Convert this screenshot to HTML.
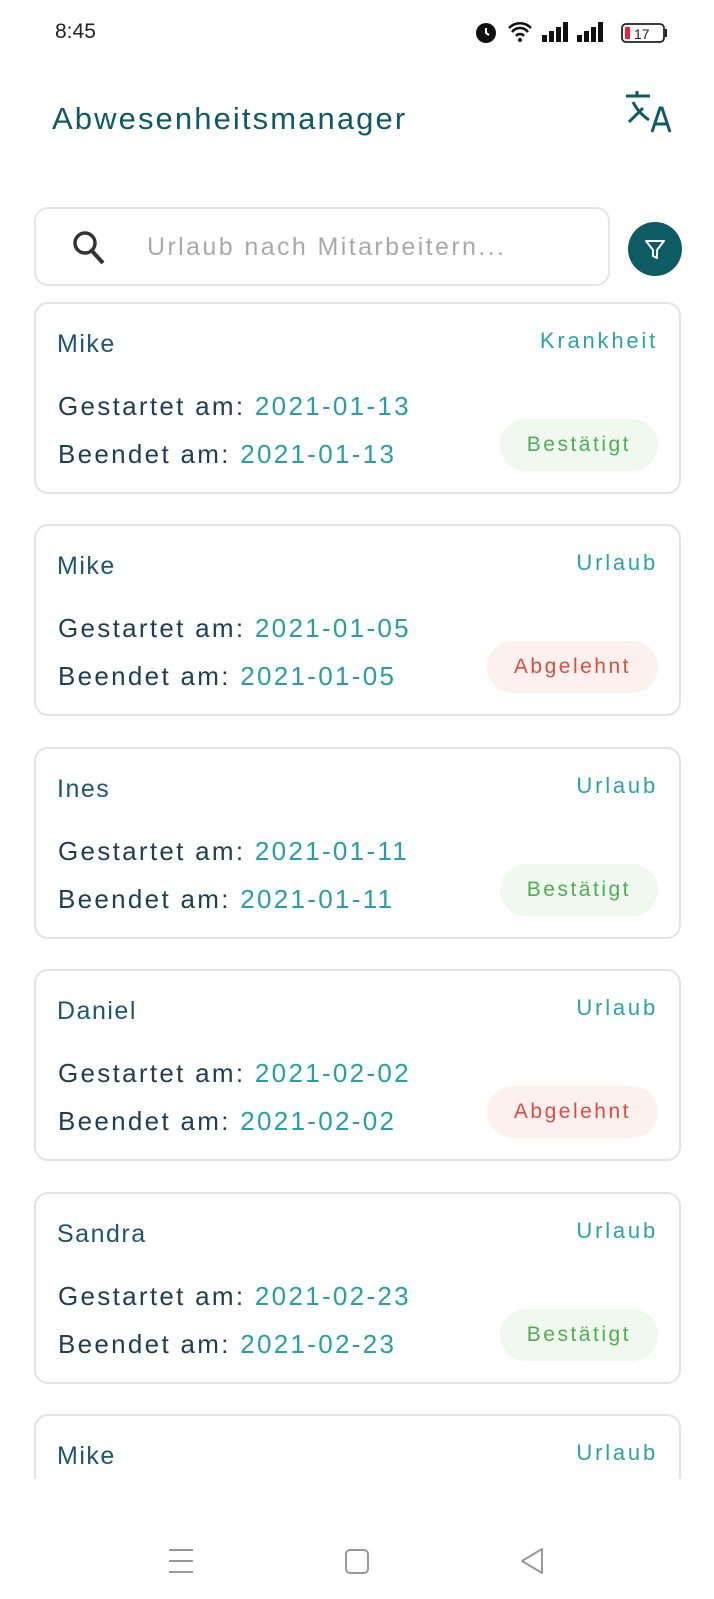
<!DOCTYPE html>
<html><head><meta charset="utf-8"><style>
*{margin:0;padding:0;box-sizing:border-box}
body{width:714px;height:1599px;background:#fff;font-family:"Liberation Sans",sans-serif;position:relative;overflow:hidden}
.abs{position:absolute}
.card{position:absolute;left:34px;width:647px;height:192px;border:2px solid #e3e3e3;border-radius:14px;background:#fff}
.name{position:absolute;left:21px;top:26px;font-size:25px;color:#1f5570;letter-spacing:1.5px}
.type{position:absolute;right:21px;top:24px;font-size:22px;color:#2aa3ab;letter-spacing:2.8px}
.l1,.l2{position:absolute;left:22px;font-size:26px;color:#1f3d55;letter-spacing:2.3px;white-space:nowrap}
.l1{top:87px}.l2{top:135px}
.l1 span,.l2 span{color:#25a0a8}
.badge{position:absolute;right:21px;top:115px;height:52px;border-radius:26px;font-size:21px;letter-spacing:2.5px;line-height:52px;padding:0 27px}
.ok{background:#f1f8f0;color:#4caf50}
.no{background:#fdf1f0;color:#e14b3d}
.clip{position:absolute;left:0;top:1479px;width:714px;height:120px;background:#fff}
</style></head><body>
<div class="abs" style="left:55px;top:20px;font-size:21px;color:#222">8:45</div>
<svg class="abs" style="left:474px;top:18px" width="200" height="28" viewBox="0 0 200 28">
<circle cx="12" cy="15" r="10" fill="#111"/><path d="M12 10v5l3 2" stroke="#fff" stroke-width="2" fill="none"/>
<path d="M35 10a15 15 0 0 1 22 0M38 14a10 10 0 0 1 16 0M42 18a5 5 0 0 1 8 0" stroke="#111" stroke-width="2.5" fill="none"/><circle cx="46" cy="22" r="2" fill="#111"/>
<rect x="68" y="17" width="5" height="7" fill="#111"/><rect x="75" y="13" width="5" height="11" fill="#111"/><rect x="82" y="9" width="5" height="15" fill="#111"/><rect x="89" y="4" width="5" height="20" fill="#111"/>
<rect x="103" y="17" width="5" height="7" fill="#111"/><rect x="110" y="13" width="5" height="11" fill="#111"/><rect x="117" y="9" width="5" height="15" fill="#111"/><rect x="124" y="4" width="5" height="20" fill="#111"/>
<rect x="148" y="6" width="42" height="18" rx="4" fill="none" stroke="#222" stroke-width="1.8"/><rect x="151" y="9" width="5" height="12" fill="#e23"/><rect x="191" y="11" width="2" height="8" fill="#222"/>
<text x="160" y="21" font-size="14" fill="#222" font-family="Liberation Sans">17</text></svg>
<div class="abs" style="left:52px;top:101px;font-size:31px;color:#0d5c63;letter-spacing:2.1px">Abwesenheitsmanager</div>
<svg class="abs" style="left:624px;top:90px" width="48" height="46" viewBox="0 0 48 46">
<path d="M2 6h24M13 1v6M5 32l14-14M9 12c4 8 10 14 16 18" stroke="#0d5c63" stroke-width="3" fill="none"/>
<path d="M28 42l8-24h2l8 24M31 34h12" stroke="#0d5c63" stroke-width="3" fill="none"/></svg>
<div class="abs" style="left:34px;top:207px;width:576px;height:79px;border:2px solid #e6e6e6;border-radius:14px"></div>
<svg class="abs" style="left:70px;top:228px" width="38" height="40" viewBox="0 0 38 40"><circle cx="15" cy="15" r="10" stroke="#333" stroke-width="3.5" fill="none"/><path d="M22 23l11 12" stroke="#333" stroke-width="4"/></svg>
<div class="abs" style="left:147px;top:233px;font-size:25px;color:#aaa;letter-spacing:2.4px">Urlaub nach Mitarbeitern...</div>
<div class="abs" style="left:628px;top:222px;width:54px;height:54px;border-radius:50%;background:#0d5c63"></div>
<svg class="abs" style="left:642px;top:236px" width="26" height="26" viewBox="0 0 26 26"><path d="M4 5h18l-7 9v8l-4-2v-6z" stroke="#fff" stroke-width="2" fill="none" stroke-linejoin="round"/></svg>

<div class="card" style="top:302px"><div class="name">Mike</div><div class="type">Krankheit</div><div class="l1">Gestartet am: <span>2021-01-13</span></div><div class="l2">Beendet am: <span>2021-01-13</span></div><div class="badge ok">Bestätigt</div></div>
<div class="card" style="top:524px"><div class="name">Mike</div><div class="type">Urlaub</div><div class="l1">Gestartet am: <span>2021-01-05</span></div><div class="l2">Beendet am: <span>2021-01-05</span></div><div class="badge no">Abgelehnt</div></div>
<div class="card" style="top:747px"><div class="name">Ines</div><div class="type">Urlaub</div><div class="l1">Gestartet am: <span>2021-01-11</span></div><div class="l2">Beendet am: <span>2021-01-11</span></div><div class="badge ok">Bestätigt</div></div>
<div class="card" style="top:969px"><div class="name">Daniel</div><div class="type">Urlaub</div><div class="l1">Gestartet am: <span>2021-02-02</span></div><div class="l2">Beendet am: <span>2021-02-02</span></div><div class="badge no">Abgelehnt</div></div>
<div class="card" style="top:1192px"><div class="name">Sandra</div><div class="type">Urlaub</div><div class="l1">Gestartet am: <span>2021-02-23</span></div><div class="l2">Beendet am: <span>2021-02-23</span></div><div class="badge ok">Bestätigt</div></div>
<div class="card" style="top:1414px;height:120px"><div class="name">Mike</div><div class="type">Urlaub</div></div>
<div class="clip"></div>
<svg class="abs" style="left:160px;top:1547px" width="400" height="30" viewBox="0 0 400 30">
<path d="M9 3h24M9 14h24M9 25h24" stroke="#999" stroke-width="2"/>
<rect x="186" y="3" width="22" height="23" rx="4" stroke="#999" stroke-width="2" fill="none"/>
<path d="M382 2l-20 12 20 12z" stroke="#999" stroke-width="2" fill="none" stroke-linejoin="round"/></svg>
</body></html>
